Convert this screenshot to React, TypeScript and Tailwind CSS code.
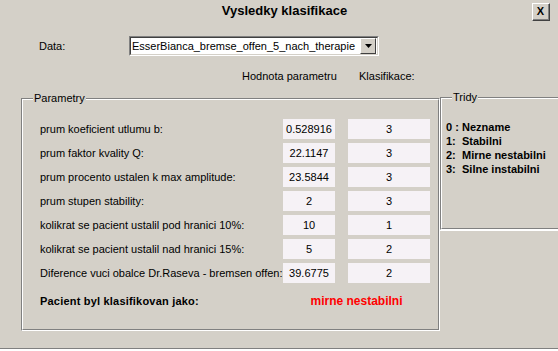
import type { ReactNode } from "react";

const params = [
  { label: "prum koeficient utlumu b:", value: "0.528916", cls: "3" },
  { label: "prum faktor kvality Q:", value: "22.1147", cls: "3" },
  { label: "prum procento ustalen k max amplitude:", value: "23.5844", cls: "3" },
  { label: "prum stupen stability:", value: "2", cls: "3" },
  { label: "kolikrat se pacient ustalil pod hranici 10%:", value: "10", cls: "1" },
  { label: "kolikrat se pacient ustalil nad hranici 15%:", value: "5", cls: "2" },
  { label: "Diference vuci obalce Dr.Raseva - bremsen offen:", value: "39.6775", cls: "2" },
];

const classes = [
  { num: "0 :", name: "Nezname" },
  { num: "1:", name: "Stabilni" },
  { num: "2:", name: "Mirne nestabilni" },
  { num: "3:", name: "Silne instabilni" },
];

// etched frame, same look as a win32 group box
function GroupBox({
  title,
  titleLeft,
  className,
  children,
}: {
  title: string;
  titleLeft: string;
  className?: string;
  children?: ReactNode;
}) {
  return (
    <div
      className={`relative shrink-0 border border-t-[#808080] border-l-[#808080] border-b-white border-r-white ${className ?? ""}`}
    >
      <div className="h-full border border-t-white border-l-white border-b-[#808080] border-r-[#808080]">
        {children}
      </div>
      <span
        className={`absolute top-[-8px] ${titleLeft} bg-[#d4d0c8] px-[1px] text-[11px] leading-[14px] text-black`}
      >
        {title}
      </span>
    </div>
  );
}

export default function App() {
  return (
    <div className="w-[558px] h-[351px] overflow-hidden bg-[#d4d0c8] text-black font-['Liberation_Sans',Arial,sans-serif]">
      <div className="h-[349px] border-b border-[#808080]">
        {/* title bar */}
        <div className="flex items-start pt-[3px]">
          <div className="flex-1 pl-[37px] text-center text-[13px] font-bold leading-[15px]">
            Vysledky klasifikace
          </div>
          <button className="mr-[8px] flex h-[18px] w-[18px] items-center justify-center border border-t-white border-l-white border-b-[#404040] border-r-[#404040] bg-[#d4d0c8]">
            <span className="flex h-full w-full items-center justify-center border-b border-r border-[#808080] text-[11px] font-bold leading-none">
              X
            </span>
          </button>
        </div>

        {/* data selector */}
        <div className="mt-[15px] flex items-center">
          <span className="ml-[39px] w-[90px] text-[11px] leading-[14px]">Data:</span>
          <div className="h-[20px] w-[250px] border border-t-[#808080] border-l-[#808080] border-b-white border-r-white">
            <div className="flex h-full items-center border border-t-[#404040] border-l-[#404040] border-b-[#d4d0c8] border-r-[#d4d0c8] bg-white">
              <span className="flex-1 pl-[1px] text-[11px] leading-[14px] whitespace-nowrap overflow-hidden">
                EsserBianca_bremse_offen_5_nach_therapie
              </span>
              <div className="mr-[1px] flex h-[16px] w-[16px] items-center justify-center border border-t-white border-l-white border-b-[#404040] border-r-[#404040] bg-[#d4d0c8]">
                <svg width="7" height="4" viewBox="0 0 7 4">
                  <path d="M0 0h7L3.5 4z" fill="#000" />
                </svg>
              </div>
            </div>
          </div>
        </div>

        {/* column headers */}
        <div className="mt-[13px] flex text-[11px] leading-[14px]">
          <span className="ml-[242px] w-[117px]">Hodnota parametru</span>
          <span>Klasifikace:</span>
        </div>

        {/* groups */}
        <div className="mt-[14px] flex items-start">
          <GroupBox title="Parametry" titleLeft="left-[11px]" className="ml-[21px] mt-[1px] h-[233px] w-[419px]">
            <div className="flex flex-col gap-[4px] pt-[19px]">
              {params.map((p) => (
                <div key={p.label} className="flex items-center text-[11px] leading-[14px]">
                  <span className="ml-[17px] w-[243px] overflow-hidden whitespace-nowrap">{p.label}</span>
                  <span className="flex h-[20px] w-[52px] items-center justify-center bg-[#f6f2f6]">{p.value}</span>
                  <span className="ml-[13px] flex h-[20px] w-[82px] items-center justify-center bg-[#f6f2f6]">
                    {p.cls}
                  </span>
                </div>
              ))}
            </div>
            <div className="mt-[11px] flex font-bold leading-[14px]">
              <span className="ml-[17px] w-[243px] text-[11px] tracking-[0.2px]">Pacient byl klasifikovan jako:</span>
              <span className="w-[147px] text-center text-[12px] text-[#ff0000]">mirne nestabilni</span>
            </div>
          </GroupBox>

          <div className="flex shrink-0 flex-col">
            <GroupBox title="Tridy" titleLeft="left-[11px]" className="h-[133px] w-[130px]">
              <div className="flex flex-col pl-[4px] pt-[21px] text-[11px] font-bold leading-[14px]">
                {classes.map((c) => (
                  <div key={c.num} className="flex whitespace-nowrap">
                    <span className="w-[16px]">{c.num}</span>
                    <span>{c.name}</span>
                  </div>
                ))}
              </div>
            </GroupBox>
            <div className="ml-[-1px] h-[101px] w-[131px] border-t border-l border-white" />
          </div>
        </div>
      </div>
      <div className="h-[2px] bg-white" />
    </div>
  );
}
